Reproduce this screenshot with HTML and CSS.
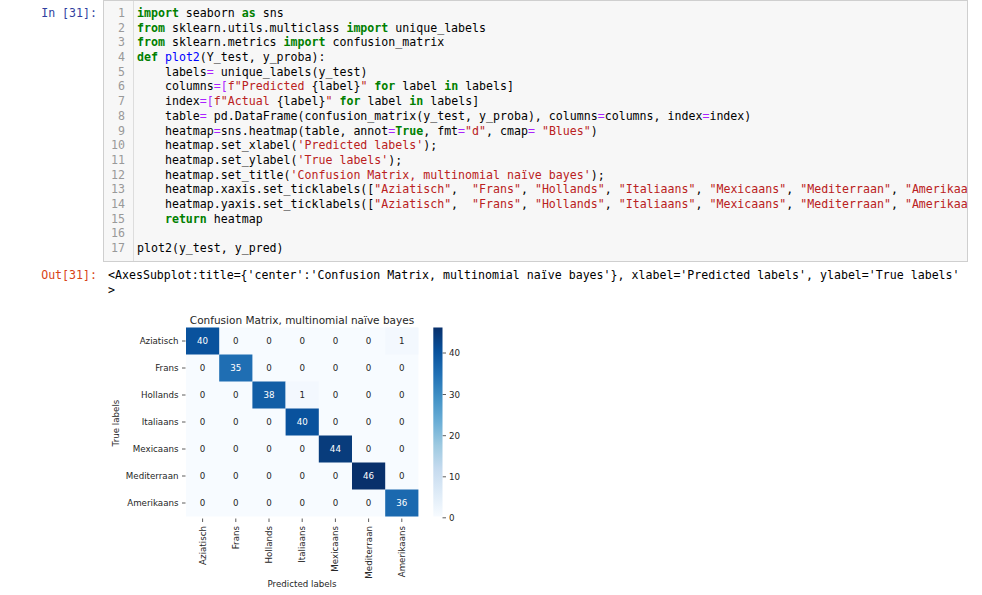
FILE: index.html
```html
<!DOCTYPE html>
<html>
<head>
<meta charset="utf-8">
<link rel="stylesheet" href="styles.css">
</head>
<body>
<div class="cell in">
<div class="prompt">In [31]:</div>
<div class="editor">
<pre class="gutter">1
2
3
4
5
6
7
8
9
10
11
12
13
14
15
16
17</pre>
<pre class="src"><span class="k">import</span> seaborn <span class="k">as</span> sns
<span class="k">from</span> sklearn.utils.multiclass <span class="k">import</span> unique_labels
<span class="k">from</span> sklearn.metrics <span class="k">import</span> confusion_matrix
<span class="k">def</span> <span class="d">plot2</span>(Y_test, y_proba):
    labels<span class="o">=</span> unique_labels(y_test)
    columns<span class="o">=[</span><span class="s">f"Predicted </span>{label}<span class="s">"</span> <span class="k">for</span> label <span class="k">in</span> labels]
    index<span class="o">=[</span><span class="s">f"Actual </span>{label}<span class="s">"</span> <span class="k">for</span> label <span class="k">in</span> labels]
    table<span class="o">=</span> pd.DataFrame(confusion_matrix(y_test, y_proba), columns<span class="o">=</span>columns, index<span class="o">=</span>index)
    heatmap<span class="o">=</span>sns.heatmap(table, annot<span class="o">=</span><span class="k">True</span>, fmt<span class="o">=</span><span class="s">"d"</span>, cmap<span class="o">=</span> <span class="s">"Blues"</span>)
    heatmap.set_xlabel(<span class="s">'Predicted labels'</span>);
    heatmap.set_ylabel(<span class="s">'True labels'</span>);
    heatmap.set_title(<span class="s">'Confusion Matrix, multinomial naïve bayes'</span>);
    heatmap.xaxis.set_ticklabels([<span class="s">"Aziatisch"</span>,  <span class="s">"Frans"</span>, <span class="s">"Hollands"</span>, <span class="s">"Italiaans"</span>, <span class="s">"Mexicaans"</span>, <span class="s">"Mediterraan"</span>, <span class="s">"Amerikaans"</span>]);
    heatmap.yaxis.set_ticklabels([<span class="s">"Aziatisch"</span>,  <span class="s">"Frans"</span>, <span class="s">"Hollands"</span>, <span class="s">"Italiaans"</span>, <span class="s">"Mexicaans"</span>, <span class="s">"Mediterraan"</span>, <span class="s">"Amerikaans"</span>]);
    <span class="k">return</span> heatmap

plot2(y_test, y_pred)</pre>
</div>
</div>

<div class="cell out">
<div class="prompt">Out[31]:</div>
<div class="outarea">
<pre class="res">&lt;AxesSubplot:title={'center':'Confusion Matrix, multinomial naïve bayes'}, xlabel='Predicted labels', ylabel='True labels'
&gt;</pre>
<svg class="fig" width="370" height="292" xmlns="http://www.w3.org/2000/svg">
<defs>
<linearGradient id="blues" x1="0" y1="1" x2="0" y2="0">
<stop offset="0" stop-color="#f7fbff"/>
<stop offset="0.125" stop-color="#deebf7"/>
<stop offset="0.25" stop-color="#c6dbef"/>
<stop offset="0.375" stop-color="#9ecae1"/>
<stop offset="0.5" stop-color="#6baed6"/>
<stop offset="0.625" stop-color="#4292c6"/>
<stop offset="0.75" stop-color="#2171b5"/>
<stop offset="0.875" stop-color="#08519c"/>
<stop offset="1" stop-color="#08306b"/>
</linearGradient>
</defs>
<g transform="translate(-108,-300)">
<text class="title" x="302" y="319.5">Confusion Matrix, multinomial naïve bayes</text>

<rect x="186" y="327.5" width="232.4" height="189" fill="#f7fbff"/>
<rect x="186" y="327.5" width="33.2" height="27" fill="#09529d"/>
<rect x="385.2" y="327.5" width="33.2" height="27" fill="#f3f8fe"/>
<rect x="219.2" y="354.5" width="33.2" height="27" fill="#1f6eb3"/>
<rect x="252.4" y="381.5" width="33.2" height="27" fill="#125ea6"/>
<rect x="285.6" y="381.5" width="33.2" height="27" fill="#f3f8fe"/>
<rect x="285.6" y="408.5" width="33.2" height="27" fill="#09529d"/>
<rect x="318.8" y="435.5" width="33.2" height="27" fill="#083c7c"/>
<rect x="352" y="462.5" width="33.2" height="27" fill="#08306b"/>
<rect x="385.2" y="489.5" width="33.2" height="27" fill="#1b69af"/>

<g class="ann">
<g transform="translate(0,341)"><text x="202.6" class="w">40</text><text x="235.8">0</text><text x="269">0</text><text x="302.2">0</text><text x="335.4">0</text><text x="368.6">0</text><text x="401.8">1</text></g>
<g transform="translate(0,368)"><text x="202.6">0</text><text x="235.8" class="w">35</text><text x="269">0</text><text x="302.2">0</text><text x="335.4">0</text><text x="368.6">0</text><text x="401.8">0</text></g>
<g transform="translate(0,395)"><text x="202.6">0</text><text x="235.8">0</text><text x="269" class="w">38</text><text x="302.2">1</text><text x="335.4">0</text><text x="368.6">0</text><text x="401.8">0</text></g>
<g transform="translate(0,422)"><text x="202.6">0</text><text x="235.8">0</text><text x="269">0</text><text x="302.2" class="w">40</text><text x="335.4">0</text><text x="368.6">0</text><text x="401.8">0</text></g>
<g transform="translate(0,449)"><text x="202.6">0</text><text x="235.8">0</text><text x="269">0</text><text x="302.2">0</text><text x="335.4" class="w">44</text><text x="368.6">0</text><text x="401.8">0</text></g>
<g transform="translate(0,476)"><text x="202.6">0</text><text x="235.8">0</text><text x="269">0</text><text x="302.2">0</text><text x="335.4">0</text><text x="368.6" class="w">46</text><text x="401.8">0</text></g>
<g transform="translate(0,503)"><text x="202.6">0</text><text x="235.8">0</text><text x="269">0</text><text x="302.2">0</text><text x="335.4">0</text><text x="368.6">0</text><text x="401.8" class="w">36</text></g>
</g>

<g class="ticks">
<line x1="182" y1="341" x2="185.5" y2="341"/>
<line x1="182" y1="368" x2="185.5" y2="368"/>
<line x1="182" y1="395" x2="185.5" y2="395"/>
<line x1="182" y1="422" x2="185.5" y2="422"/>
<line x1="182" y1="449" x2="185.5" y2="449"/>
<line x1="182" y1="476" x2="185.5" y2="476"/>
<line x1="182" y1="503" x2="185.5" y2="503"/>
<line x1="202.6" y1="518.5" x2="202.6" y2="522"/>
<line x1="235.8" y1="518.5" x2="235.8" y2="522"/>
<line x1="269" y1="518.5" x2="269" y2="522"/>
<line x1="302.2" y1="518.5" x2="302.2" y2="522"/>
<line x1="335.4" y1="518.5" x2="335.4" y2="522"/>
<line x1="368.6" y1="518.5" x2="368.6" y2="522"/>
<line x1="401.8" y1="518.5" x2="401.8" y2="522"/>
<line x1="442.5" y1="353" x2="446" y2="353"/>
<line x1="442.5" y1="394.5" x2="446" y2="394.5"/>
<line x1="442.5" y1="435.7" x2="446" y2="435.7"/>
<line x1="442.5" y1="476.8" x2="446" y2="476.8"/>
<line x1="442.5" y1="517.8" x2="446" y2="517.8"/>
</g>

<g class="rowlab">
<text x="178.5" y="341">Aziatisch</text>
<text x="178.5" y="368">Frans</text>
<text x="178.5" y="395">Hollands</text>
<text x="178.5" y="422">Italiaans</text>
<text x="178.5" y="449">Mexicaans</text>
<text x="178.5" y="476">Mediterraan</text>
<text x="178.5" y="503">Amerikaans</text>
</g>

<g class="collab">
<text transform="translate(202.6,526) rotate(-90)">Aziatisch</text>
<text transform="translate(235.8,526) rotate(-90)">Frans</text>
<text transform="translate(269,526) rotate(-90)">Hollands</text>
<text transform="translate(302.2,526) rotate(-90)">Italiaans</text>
<text transform="translate(335.4,526) rotate(-90)">Mexicaans</text>
<text transform="translate(368.6,526) rotate(-90)">Mediterraan</text>
<text transform="translate(401.8,526) rotate(-90)">Amerikaans</text>
</g>

<text class="axlab" x="302" y="584">Predicted labels</text>
<text class="axlab" transform="translate(116,423) rotate(-90)">True labels</text>

<rect x="433.3" y="327.5" width="9.2" height="189" fill="url(#blues)"/>
<g class="cblab">
<text x="449" y="353">40</text>
<text x="449" y="394.5">30</text>
<text x="449" y="435.7">20</text>
<text x="449" y="476.8">10</text>
<text x="449" y="517.8">0</text>
</g>
</g>
</svg>
</div>
</div>
</body>
</html>
```

FILE: styles.css
```css
* {
  box-sizing: border-box;
}

html,
body {
  margin: 0;
  padding: 0;
  background: #ffffff;
  overflow: hidden;
}

.cell {
  display: flex;
  align-items: flex-start;
}

.prompt {
  width: 103px;
  flex: none;
  padding-right: 6px;
  text-align: right;
  font-family: "DejaVu Sans Mono", monospace;
  font-size: 11.6px;
  line-height: 14.69px;
  white-space: pre;
}

.in .prompt {
  color: #303f9f;
  padding-top: 6px;
}

.editor {
  width: 865px;
  flex: none;
  display: flex;
  border: 1px solid #cfcfcf;
  background: #f7f7f7;
  overflow: hidden;
}

.gutter,
.src,
.res {
  margin: 0;
  font-family: "DejaVu Sans Mono", monospace;
  font-size: 11.6px;
  line-height: 14.69px;
  white-space: pre;
}

.gutter {
  width: 30px;
  flex: none;
  padding: 5px 8px 5px 0;
  border-right: 1px solid #dddddd;
  text-align: right;
  color: #999999;
}

.src {
  flex: 1;
  min-width: 0;
  padding: 5px 0 5px 3px;
  overflow: hidden;
  color: #000000;
}

.k {
  color: #008000;
  font-weight: bold;
}

.d {
  color: #0000ff;
}

.s {
  color: #ba2121;
}

.o {
  color: #aa22ff;
}

.out {
  margin-top: 6.5px;
}

.out .prompt {
  color: #d84315;
  line-height: 14.5px;
}

.outarea {
  padding-left: 5px;
}

.res {
  line-height: 14.5px;
  color: #000000;
}

.fig {
  display: block;
  margin-top: 2.5px;
  font-family: "DejaVu Sans", sans-serif;
}

.fig text {
  fill: #262626;
  dominant-baseline: central;
  font-size: 8.7px;
}

.fig .title {
  font-size: 10.5px;
  text-anchor: middle;
}

.ann text {
  text-anchor: middle;
}

.ann text.w {
  fill: #ffffff;
}

.ticks line {
  stroke: #333333;
  stroke-width: 0.8;
}

.rowlab text {
  text-anchor: end;
}

.collab text {
  text-anchor: end;
}

.axlab {
  text-anchor: middle;
}

.cblab text {
  text-anchor: start;
}
```
